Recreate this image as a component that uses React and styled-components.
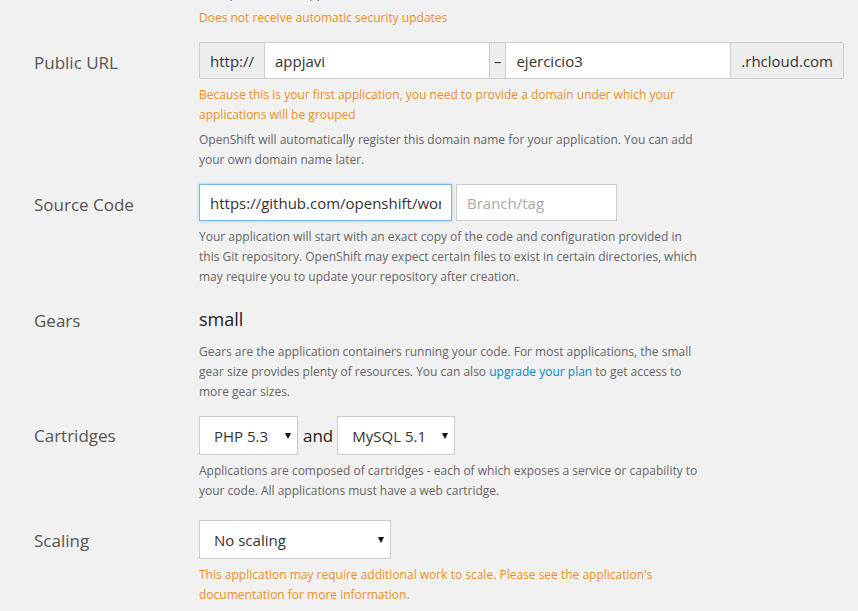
import React from "react";
import styled, { createGlobalStyle } from "styled-components";

const GlobalStyle = createGlobalStyle`
  body {
    margin: 0;
    background: #f1f1f1;
    font-family: "Open Sans", "Liberation Sans", sans-serif;
  }
`;

const Form = styled.div`
  margin-top: -17px;
  width: 858px;
`;

const Group = styled.div`
  display: grid;
  grid-template-columns: 199px 645px;
  margin-bottom: ${(p) => p.$gap || 15}px;
`;

const Label = styled.div`
  padding-left: 34px;
  padding-top: ${(p) => (p.$dy === undefined ? 2 : p.$dy)}px;
  font-size: 17px;
  color: #555;
  line-height: ${(p) => p.$h || 37}px;
`;

const Controls = styled.div`
  display: flex;
  flex-direction: column;
`;

const Help = styled.p`
  margin: ${(p) => (p.$top === undefined ? 5 : p.$top)}px 0 -1px;
  padding-top: 1px;
  max-width: 503px;
  font-size: 12px;
  line-height: 20px;
  color: ${(p) => (p.$warn ? "#eb8f1f" : "#666")};
  a {
    color: #0088ce;
    text-decoration: none;
  }
`;

const InputGroup = styled.div`
  display: flex;
  height: 37px;
  width: 645px;
  box-sizing: border-box;
  border: 1px solid #ccc;
  border-radius: 2px;
  background: #fff;
`;

const Addon = styled.span`
  display: flex;
  align-items: center;
  padding: 0 ${(p) => p.$pad || 10}px;
  background: #eeeeee;
  font-size: 15px;
  color: #333;
  border-left: ${(p) => (p.$first ? "none" : "1px solid #ccc")};
  border-right: ${(p) => (p.$last ? "none" : "1px solid #ccc")};
`;

const GroupInput = styled.input`
  flex: 1;
  min-width: 0;
  border: none;
  outline: none;
  padding: 0 10px;
  font-family: inherit;
  font-size: 15px;
  color: #333;
  background: #fff;
`;

const Row = styled.div`
  display: flex;
  align-items: center;
  gap: ${(p) => (p.$gap === undefined ? 4 : p.$gap)}px;
`;

const TextInput = styled.input`
  box-sizing: border-box;
  width: ${(p) => p.$w}px;
  height: 37px;
  padding: 0 10px;
  border: 1px solid ${(p) => (p.$focus ? "#7db6ea" : "#ccc")};
  box-shadow: ${(p) => (p.$focus ? "0 0 3px rgba(102,175,233,0.6)" : "none")};
  outline: none;
  font-family: inherit;
  font-size: 15px;
  color: #333;
  background: #fff;
  &::placeholder {
    color: #aaa;
  }
`;

const Static = styled.div`
  height: 35px;
  line-height: 37px;
  font-size: 18px;
  color: #222;
`;

const SelectBox = styled.div`
  position: relative;
  width: ${(p) => p.$w}px;
  height: 39px;
`;

const Select = styled.select`
  appearance: none;
  box-sizing: border-box;
  width: 100%;
  height: 100%;
  padding: 0 24px 0 14px;
  border: 1px solid #ccc;
  border-radius: 0;
  background: #fff;
  font-family: inherit;
  font-size: 15px;
  color: #333;
  outline: none;
`;

const Caret = styled.span`
  position: absolute;
  right: 7px;
  top: 17px;
  width: 0;
  height: 0;
  border-left: 3px solid transparent;
  border-right: 3px solid transparent;
  border-top: 6px solid #111;
  pointer-events: none;
`;

const And = styled.span`
  font-size: 17px;
  color: #222;
  margin: 0 4px 0 5px;
`;

const Dropdown = ({ w, value }) => (
  <SelectBox $w={w}>
    <Select defaultValue={value}>
      <option>{value}</option>
    </Select>
    <Caret />
  </SelectBox>
);

export default function App() {
  return (
    <>
      <GlobalStyle />
      <Form>
        <Group>
          <div />
          <Controls>
            <Help $top={0}>A simple PHP web application</Help>
            <Help $top={4} $warn>Does not receive automatic security updates</Help>
          </Controls>
        </Group>

        <Group>
          <Label>Public URL</Label>
          <Controls>
            <InputGroup>
              <Addon $first>http://</Addon>
              <GroupInput defaultValue="appjavi" />
              <Addon $pad={4}>–</Addon>
              <GroupInput defaultValue="ejercicio3" />
              <Addon $last>.rhcloud.com</Addon>
            </InputGroup>
            <Help $warn>
              Because this is your first application, you need to provide a domain under which your
              applications will be grouped
            </Help>
            <Help>
              OpenShift will automatically register this domain name for your application. You can add
              your own domain name later.
            </Help>
          </Controls>
        </Group>

        <Group>
          <Label>Source Code</Label>
          <Controls>
            <Row>
              <TextInput $w={253} $focus defaultValue="https://github.com/openshift/wordpress-example" />
              <TextInput $w={161} placeholder="Branch/tag" />
            </Row>
            <Help>
              Your application will start with an exact copy of the code and configuration provided in
              this Git repository. OpenShift may expect certain files to exist in certain directories, which
              may require you to update your repository after creation.
            </Help>
          </Controls>
        </Group>

        <Group>
          <Label $h={35}>Gears</Label>
          <Controls>
            <Static>small</Static>
            <Help>
              Gears are the application containers running your code. For most applications, the small
              gear size provides plenty of resources. You can also <a href="#">upgrade your plan</a> to get
              access to more gear sizes.
            </Help>
          </Controls>
        </Group>

        <Group $gap={20}>
          <Label $h={39} $dy={0}>Cartridges</Label>
          <Controls>
            <Row $gap={0}>
              <Dropdown w={99} value="PHP 5.3" />
              <And>and</And>
              <Dropdown w={118} value="MySQL 5.1" />
            </Row>
            <Help>
              Applications are composed of cartridges - each of which exposes a service or capability to
              your code. All applications must have a web cartridge.
            </Help>
          </Controls>
        </Group>

        <Group>
          <Label $h={39} $dy={1}>Scaling</Label>
          <Controls>
            <Dropdown w={192} value="No scaling" />
            <Help $warn>
              This application may require additional work to scale. Please see the application's
              documentation for more information.
            </Help>
          </Controls>
        </Group>
      </Form>
    </>
  );
}
